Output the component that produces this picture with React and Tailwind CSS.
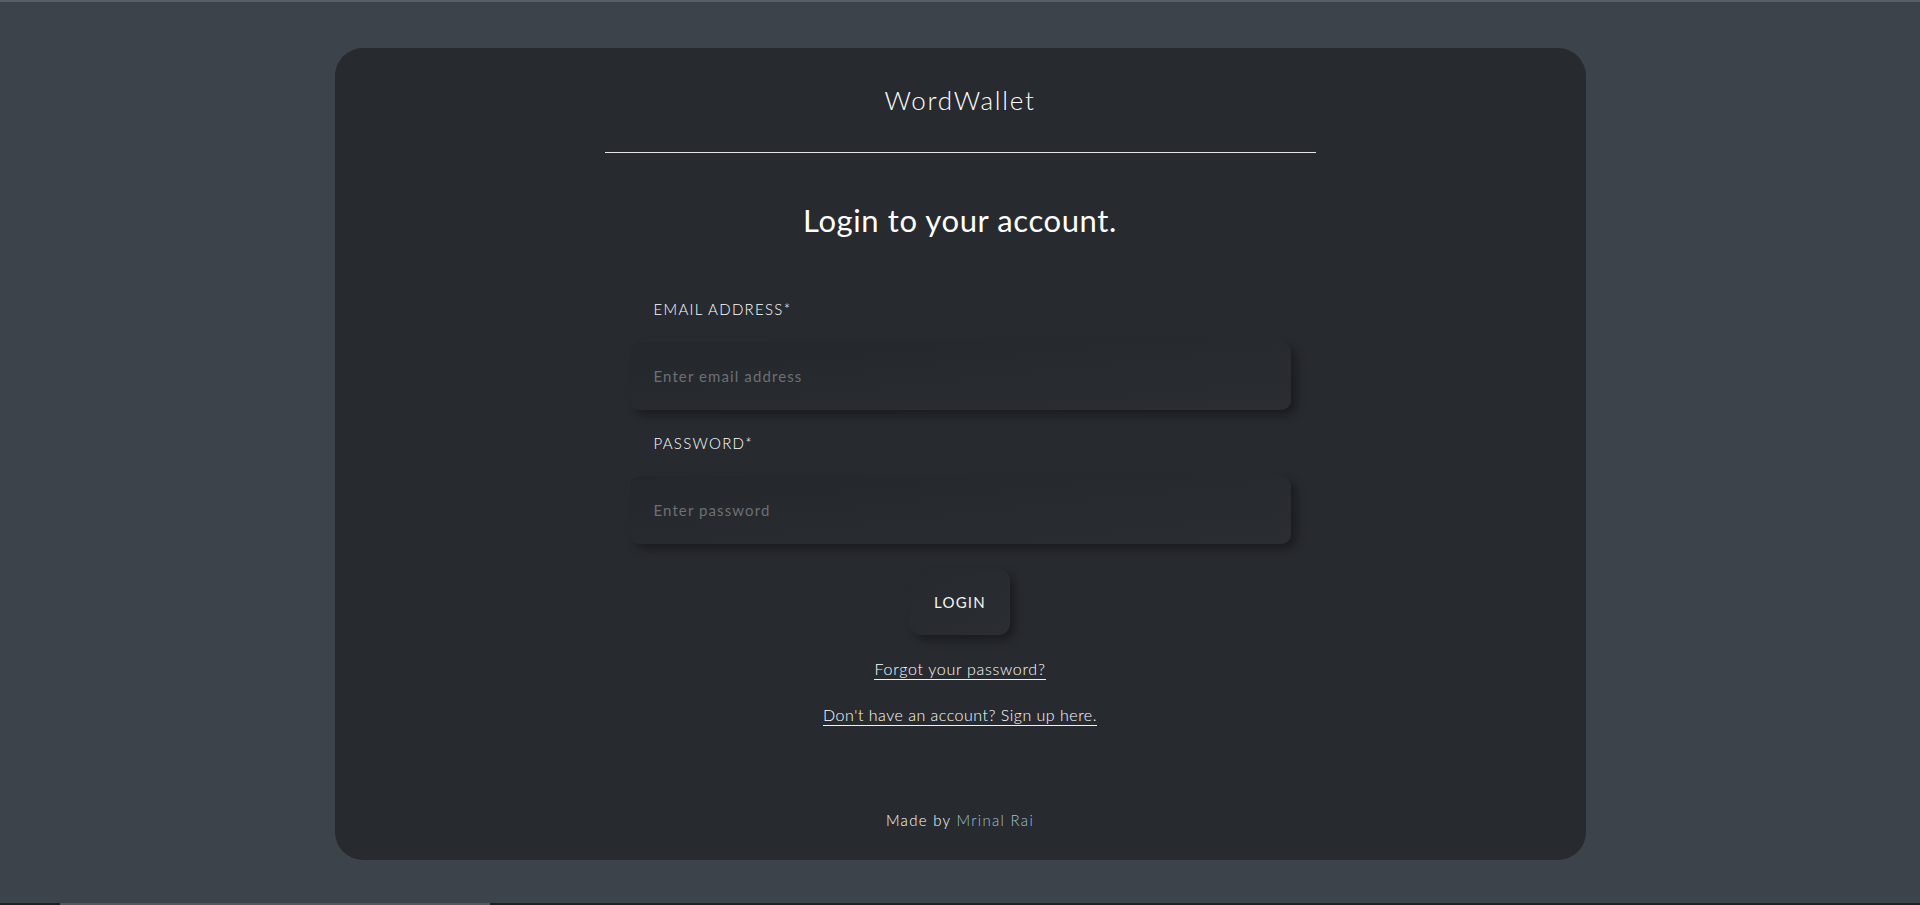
import React from 'react'

const font = { fontFamily: 'Lato, "Open Sans", sans-serif' }

const Field = ({ label, placeholder, type }) => (
  <div className="flex flex-col">
    <label className="pl-6 text-[15px] leading-5 font-light tracking-[1.3px] text-white uppercase">{label}</label>
    <input
      type={type}
      placeholder={placeholder}
      className="mt-[23px] h-[68px] w-full rounded-[10px] bg-gradient-to-br from-[#24272b] to-[#2a2d32] px-6 text-[15px] tracking-[1.1px] text-[#e0e0e0] placeholder:text-[#6d7075] outline-none shadow-[5px_5px_10px_rgba(0,0,0,0.35),-3px_-3px_8px_rgba(255,255,255,0.015)]"
    />
  </div>
)

export default function App() {
  return (
    <div className="h-screen w-full flex flex-col bg-[#3d434b] overflow-hidden" style={font}>
      <div className="h-[2px] bg-[#5a5d61]" />
      <div className="flex-1 flex justify-center">
        <div className="mt-[46px] w-[1251px] h-[812px] rounded-[28px] bg-[#272a2f] flex flex-col items-center text-white">
          <div className="pt-[36px] text-[26px] leading-8 font-light tracking-[1.7px]">WordWallet</div>
          <div className="mt-[36px] h-px w-[711px] bg-[#e6e6e6]" />
          <h1 className="mt-[49px] text-[31px] leading-9 tracking-[0.6px]">Login to your account.</h1>

          <form className="mt-[61px] w-[661px] flex flex-col" onSubmit={(e) => e.preventDefault()}>
            <Field label="Email Address*" placeholder="Enter email address" type="email" />
            <div className="mt-[23px]">
              <Field label="Password*" placeholder="Enter password" type="password" />
            </div>
            <button
              type="submit"
              className="mx-auto mt-[25px] h-[66px] w-[100px] rounded-[12px] bg-gradient-to-br from-[#26292d] to-[#2a2d31] text-[15px] tracking-[1.2px] text-[#f4f4f4] shadow-[5px_5px_10px_rgba(0,0,0,0.35),-3px_-3px_8px_rgba(255,255,255,0.015)]"
            >
              LOGIN
            </button>
          </form>

          <a href="#" className="mt-[24px] text-[16px] leading-5 font-light tracking-[0.7px] text-white border-b border-[#f0f0f0]">
            Forgot your password?
          </a>
          <a href="#" className="mt-[25px] text-[16px] leading-5 font-light tracking-[0.5px] text-white border-b border-[#f0f0f0]">
            Don't have an account? Sign up here.
          </a>

          <div className="mt-auto pb-[30px] text-[15px] leading-5 font-light tracking-[1.3px] text-white">
            Made by <span className="text-[#9cc3d1]">Mrinal Rai</span>
          </div>
        </div>
      </div>
      <div className="h-[2px] flex bg-[#1e2023]">
        <div className="ml-[60px] w-[430px] bg-[#55585c]" />
      </div>
    </div>
  )
}
